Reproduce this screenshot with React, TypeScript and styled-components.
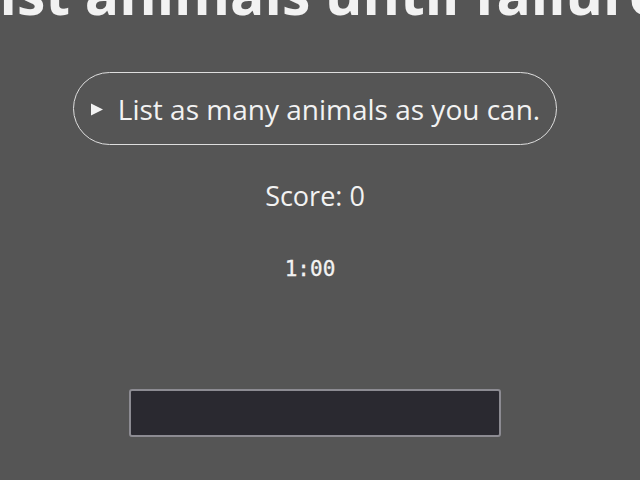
import React from "react";
import styled, { createGlobalStyle } from "styled-components";

const Global = createGlobalStyle`
  html, body {
    margin: 0;
    padding: 0;
    background: #555555;
    overflow: hidden;
  }
  body {
    font-family: "Open Sans", "Noto Sans", sans-serif;
    color: #f2f2f2;
  }
`;

const Page = styled.main`
  display: flex;
  flex-direction: column;
  align-items: center;
  width: 630px;
  height: 480px;
`;

const Title = styled.h1`
  margin: -41px 0 0;
  font-size: 57px;
  font-weight: 700;
  line-height: 68px;
  white-space: nowrap;
  color: #f2f2f2;
`;

const Prompt = styled.details`
  margin-top: 45px;
`;

const Summary = styled.summary`
  display: flex;
  align-items: center;
  gap: 14px;
  box-sizing: border-box;
  height: 73px;
  padding: 0 16px 0 16px;
  border: 1.5px solid #dedede;
  border-radius: 37px;
  font-size: 28px;
  cursor: pointer;
  list-style: none;
  &::-webkit-details-marker {
    display: none;
  }
`;

const Marker = styled.svg`
  display: block;
  width: 14px;
  height: 13px;
  flex: none;
  margin-top: 2px;
`;

const Score = styled.div`
  margin-top: 33px;
  font-size: 27px;
  line-height: 36px;
`;

const Timer = styled.div`
  margin: 42px 10px 0 0;
  font-family: "DejaVu Sans Mono", monospace;
  font-size: 21px;
  line-height: 26px;
  -webkit-text-stroke: 0.3px #f2f2f2;
`;

const Answer = styled.input`
  margin-top: 107px;
  box-sizing: border-box;
  width: 372px;
  height: 48px;
  background: #2a2930;
  border: 2px solid #8c8b92;
  border-radius: 3px;
  color: #f2f2f2;
  font-size: 20px;
  outline: none;
`;

export default function App() {
  return (
    <>
      <Global />
      <Page>
        <Title>List animals until failure</Title>
        <Prompt>
          <Summary>
            <Marker viewBox="0 0 14 13" aria-hidden="true">
              <polygon points="1,0.5 13,6.5 1,12.5" fill="#f2f2f2" />
            </Marker>
            List as many animals as you can.
          </Summary>
        </Prompt>
        <Score>Score: 0</Score>
        <Timer>1:00</Timer>
        <Answer type="text" aria-label="Animal" />
      </Page>
    </>
  );
}
